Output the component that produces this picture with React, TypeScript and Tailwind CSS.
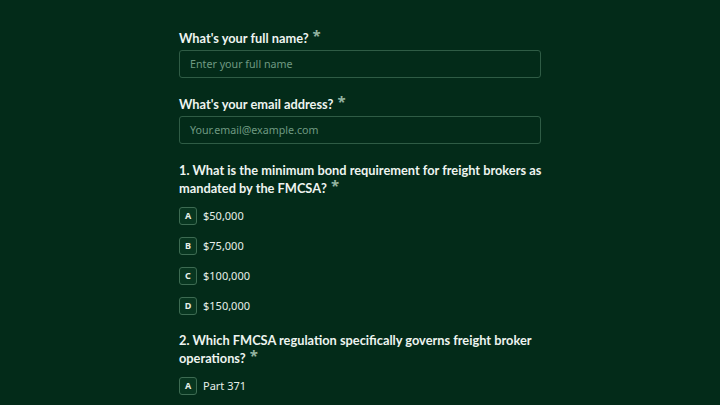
import React from "react";

const font = { fontFamily: '"Noto Sans", "Open Sans", sans-serif' };
const labelFont = { fontFamily: 'Lato, "Noto Sans", sans-serif' };

function Star() {
  return (
    <span
      className="ml-[4px] text-[#93b3a0] text-[15px] leading-none relative top-[-2px]"
      style={{ fontFamily: '"Noto Sans", sans-serif' }}
    >
      *
    </span>
  );
}

function Label({ children, className = "" }: { children: React.ReactNode; className?: string }) {
  return (
    <div className={"text-[12.8px] font-bold text-[#eef4f0] leading-[18px] whitespace-nowrap " + className} style={labelFont}>
      {children}
    </div>
  );
}

function Option({ letter, text }: { letter: string; text: string }) {
  return (
    <div className="flex items-center gap-[6px] h-[18px]">
      <div className="w-[18px] h-[18px] rounded-[3px] border border-[#3d6b52] bg-[#083620] flex items-center justify-center text-[9px] font-bold text-[#e6efe9]">
        {letter}
      </div>
      <span className="text-[11px] text-[#e6efe9]">{text}</span>
    </div>
  );
}

export default function App() {
  return (
    <div className="w-[720px] h-[405px] overflow-hidden bg-[#032b19]" style={font}>
      <div className="w-[362px] mx-auto pt-[29px] flex flex-col">
        <Label>
          What's your full name?<Star />
        </Label>
        <div className="mt-[3px] h-[28px] rounded-[3px] border border-[#2f5c45] flex items-center px-[10px] text-[10.7px] text-[#6f9a82]">
          Enter your full name
        </div>
        <Label className="mt-[17px]">
          What's your email address?<Star />
        </Label>
        <div className="mt-[3px] h-[28px] rounded-[3px] border border-[#2f5c45] flex items-center px-[10px] text-[10.7px] text-[#6f9a82]">
          Your.email@example.com
        </div>
        <Label className="mt-[17px]">
          1. What is the minimum bond requirement for freight brokers as
          <br />
          mandated by the FMCSA?<Star />
        </Label>
        <div className="mt-[10px] flex flex-col gap-[12px]">
          <Option letter="A" text="$50,000" />
          <Option letter="B" text="$75,000" />
          <Option letter="C" text="$100,000" />
          <Option letter="D" text="$150,000" />
        </div>
        <Label className="mt-[16px]">
          2. Which FMCSA regulation specifically governs freight broker
          <br />
          operations?<Star />
        </Label>
        <div className="mt-[10px] flex flex-col gap-[12px]">
          <Option letter="A" text="Part 371" />
        </div>
      </div>
    </div>
  );
}
